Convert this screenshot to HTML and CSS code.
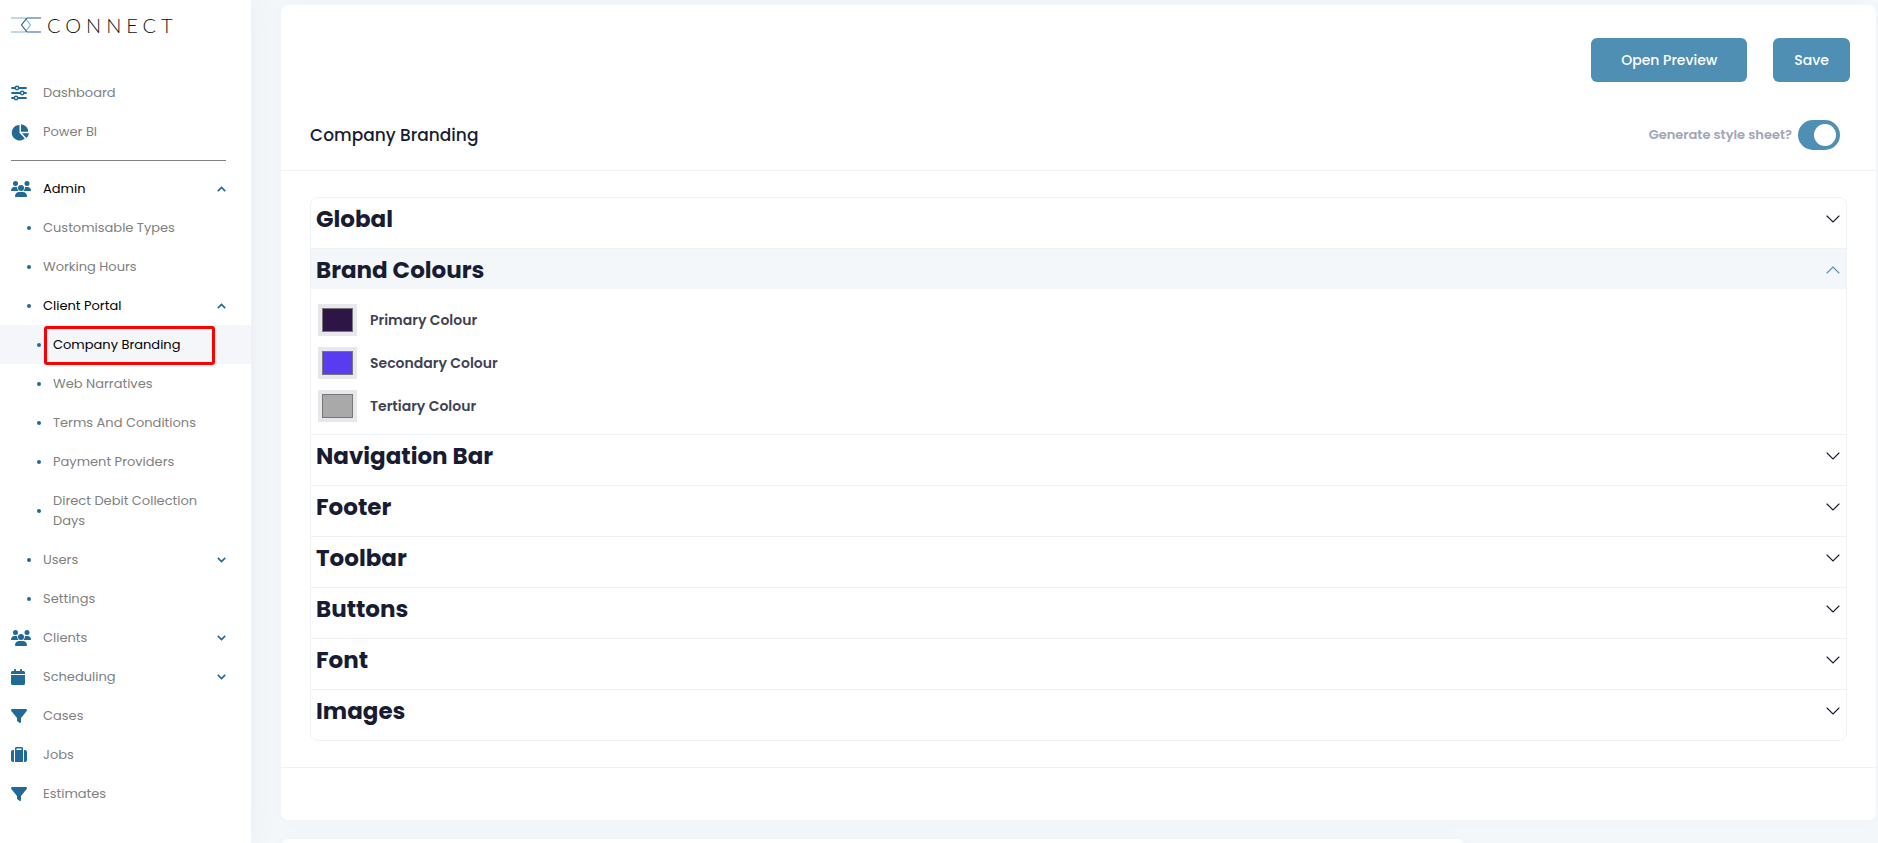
FILE: index.html
```
<!DOCTYPE html>
<html lang="en">
<head>
<meta charset="UTF-8">
<meta name="viewport" content="width=device-width, initial-scale=1.0">
<title>Company Branding</title>
<link rel="stylesheet" href="styles.css">
</head>
<body>

  <!-- shared icons -->
  <svg class="sprite" aria-hidden="true">
    <symbol id="i-sliders" viewBox="0 0 16 16">
      <g fill="none" stroke="currentColor" stroke-width="1.8" stroke-linecap="round">
        <path d="M1 3h2.800M8.200 3H15M1 8h8M13.200 8H15M1 13h1.800M7.200 13H15"/>
        <circle cx="6" cy="3" r="1.700" stroke-width="1.500"/>
        <circle cx="11.200" cy="8" r="1.700" stroke-width="1.500"/>
        <circle cx="5" cy="13" r="1.700" stroke-width="1.500"/>
      </g>
    </symbol>
    <symbol id="i-pie" viewBox="0 0 18 17">
      <path fill="currentColor" d="M8.500.900v7.900l5.300 5.700A7.800 7.800 0 1 1 8.500.900zM10 .200a7.800 7.800 0 0 1 7.300 7.600H10zM11 9.300h7a7.500 7.500 0 0 1-2.600 4.600z"/>
    </symbol>
    <symbol id="i-users" viewBox="0 0 20 16">
      <g fill="currentColor">
        <circle cx="4.500" cy="2.600" r="2.500"/>
        <circle cx="16" cy="2.600" r="2.500"/>
        <circle cx="10" cy="7" r="3"/>
        <path d="M0 9.700C0 7.400 1.500 6 3.500 6h1.600c.4 0 .8.100 1.100.200A4.500 4.500 0 0 0 7.500 10H.400C.200 10 0 9.900 0 9.700zM12.500 10a4.500 4.500 0 0 0 1.400-3.800c.300-.100.700-.200 1.100-.200h1.500C18.500 6 20 7.400 20 9.700c0 .200-.200.300-.400.300zM4 15.300C4 12.700 5.700 11 8.200 11h3.600c2.500 0 4.200 1.700 4.200 4.300 0 .400-.300.700-.700.700H4.700c-.400 0-.700-.300-.700-.700z"/>
      </g>
    </symbol>
    <symbol id="i-calendar" viewBox="0 0 14 16">
      <path fill="currentColor" d="M4 0c.600 0 1 .400 1 1v1h4V1c0-.600.400-1 1-1s1 .400 1 1v1h1.500c.800 0 1.500.700 1.500 1.500V5H0V3.500C0 2.700.700 2 1.500 2H3V1c0-.600.400-1 1-1zM0 6h14v8.500c0 .800-.700 1.500-1.500 1.500h-11C.700 16 0 15.300 0 14.500z"/>
    </symbol>
    <symbol id="i-filter" viewBox="0 0 16 16">
      <path fill="currentColor" d="M.100 1.700C.300 1.300.700 1 1.200 1h13.600c.5 0 .9.300 1.100.700.200.400.100.900-.200 1.300L10 10.100V14c0 .400-.200.700-.600.900-.300.200-.700.100-1-.100l-2-1.500c-.300-.200-.400-.500-.400-.8v-2.400L.300 3C0 2.600-.100 2.100.100 1.700z"/>
    </symbol>
    <symbol id="i-suitcase" viewBox="0 0 16 16">
      <path fill="currentColor" fill-rule="evenodd" d="M4 3V1.500C4 .700 4.700 0 5.500 0h5c.8 0 1.500.700 1.500 1.500V15H4zM5.500 3h5V1.500h-5zM0 5c0-1.100.900-2 2-2h1v12H2c-1.100 0-2-.900-2-2zM13 3h1c1.100 0 2 .9 2 2v8c0 1.100-.9 2-2 2h-1z"/>
    </symbol>
    <symbol id="i-chevron" viewBox="0 0 9 6">
      <path fill="none" stroke="currentColor" stroke-width="1.600" d="M.8.900l3.700 3.700L8.200.900"/>
    </symbol>
    <symbol id="i-arrow" viewBox="0 0 14 8">
      <path fill="none" stroke="currentColor" stroke-width="1.100" stroke-linecap="round" d="M1 1l6 6 6-6"/>
    </symbol>
  </svg>

  <div class="layout">
    <aside class="sidebar">
      <a class="logo" href="#">
        <svg class="logo-mark" viewBox="0 0 30 16" aria-hidden="true">
          <g fill="none" stroke-width="1.200">
            <path stroke="#7fb2d0" d="M0 1h14l5.500 7-5.500 7H0"/>
            <path stroke="#2c5f94" d="M30 1H16l-5.500 7 5.500 7h14"/>
          </g>
        </svg>
        <span>CONNECT</span>
      </a>

      <nav class="menu">
        <a class="menu-item" href="#"><svg class="menu-icon"><use href="#i-sliders"/></svg><span>Dashboard</span></a>
        <a class="menu-item" href="#"><svg class="menu-icon pie"><use href="#i-pie"/></svg><span>Power BI</span></a>
        <hr class="menu-divider">
        <button class="menu-item open" type="button" aria-expanded="true"><svg class="menu-icon wide"><use href="#i-users"/></svg><span>Admin</span><svg class="chevron"><use href="#i-chevron"/></svg></button>
        <a class="menu-item sub" href="#"><i class="dot"></i><span>Customisable Types</span></a>
        <a class="menu-item sub" href="#"><i class="dot"></i><span>Working Hours</span></a>
        <button class="menu-item sub open" type="button" aria-expanded="true"><i class="dot"></i><span>Client Portal</span><svg class="chevron"><use href="#i-chevron"/></svg></button>
        <a class="menu-item subsub active" href="#"><i class="dot"></i><span>Company Branding</span></a>
        <a class="menu-item subsub" href="#"><i class="dot"></i><span>Web Narratives</span></a>
        <a class="menu-item subsub" href="#"><i class="dot"></i><span>Terms And Conditions</span></a>
        <a class="menu-item subsub" href="#"><i class="dot"></i><span>Payment Providers</span></a>
        <a class="menu-item subsub" href="#"><i class="dot"></i><span>Direct Debit Collection Days</span></a>
        <button class="menu-item sub" type="button" aria-expanded="false"><i class="dot"></i><span>Users</span><svg class="chevron"><use href="#i-chevron"/></svg></button>
        <a class="menu-item sub" href="#"><i class="dot"></i><span>Settings</span></a>
        <button class="menu-item" type="button" aria-expanded="false"><svg class="menu-icon wide"><use href="#i-users"/></svg><span>Clients</span><svg class="chevron"><use href="#i-chevron"/></svg></button>
        <button class="menu-item" type="button" aria-expanded="false"><svg class="menu-icon narrow"><use href="#i-calendar"/></svg><span>Scheduling</span><svg class="chevron"><use href="#i-chevron"/></svg></button>
        <a class="menu-item" href="#"><svg class="menu-icon"><use href="#i-filter"/></svg><span>Cases</span></a>
        <a class="menu-item" href="#"><svg class="menu-icon"><use href="#i-suitcase"/></svg><span>Jobs</span></a>
        <a class="menu-item" href="#"><svg class="menu-icon"><use href="#i-filter"/></svg><span>Estimates</span></a>
      </nav>
    </aside>

    <main class="content">
      <section class="card">
        <div class="card-actions">
          <button class="btn btn-wide" type="button">Open Preview</button>
          <button class="btn" type="button">Save</button>
        </div>

        <div class="card-header">
          <h1>Company Branding</h1>
          <div class="switch">
            <label for="generate-sheet">Generate style sheet?</label>
            <input type="checkbox" id="generate-sheet" checked>
          </div>
        </div>

        <div class="card-body">
          <div class="accordion">
            <section class="panel">
              <h2><button type="button" aria-expanded="false">Global<svg><use href="#i-arrow"/></svg></button></h2>
            </section>
            <section class="panel open">
              <h2><button type="button" aria-expanded="true">Brand Colours<svg><use href="#i-arrow"/></svg></button></h2>
              <div class="panel-body">
                <div class="colour-row">
                  <input type="color" id="primary-colour" value="#2d1646">
                  <label for="primary-colour">Primary Colour</label>
                </div>
                <div class="colour-row">
                  <input type="color" id="secondary-colour" value="#5a3cf0">
                  <label for="secondary-colour">Secondary Colour</label>
                </div>
                <div class="colour-row">
                  <input type="color" id="tertiary-colour" value="#a9a9a9">
                  <label for="tertiary-colour">Tertiary Colour</label>
                </div>
              </div>
            </section>
            <section class="panel">
              <h2><button type="button" aria-expanded="false">Navigation Bar<svg><use href="#i-arrow"/></svg></button></h2>
            </section>
            <section class="panel">
              <h2><button type="button" aria-expanded="false">Footer<svg><use href="#i-arrow"/></svg></button></h2>
            </section>
            <section class="panel">
              <h2><button type="button" aria-expanded="false">Toolbar<svg><use href="#i-arrow"/></svg></button></h2>
            </section>
            <section class="panel">
              <h2><button type="button" aria-expanded="false">Buttons<svg><use href="#i-arrow"/></svg></button></h2>
            </section>
            <section class="panel">
              <h2><button type="button" aria-expanded="false">Font<svg><use href="#i-arrow"/></svg></button></h2>
            </section>
            <section class="panel">
              <h2><button type="button" aria-expanded="false">Images<svg><use href="#i-arrow"/></svg></button></h2>
            </section>
          </div>
        </div>

        <div class="card-footer"></div>
      </section>

      <section class="card card-partial"></section>
    </main>
  </div>

</body>
</html>
```
FILE: styles.css
```
* {
  box-sizing: border-box;
}

body {
  margin: 0;
  background: #f3f7fa;
  color: #181c32;
  font-family: Poppins, Inter, "Open Sans", sans-serif;
  font-size: 13px;
}

button {
  font-family: inherit;
  cursor: pointer;
}

a {
  color: inherit;
  text-decoration: none;
}

.sprite {
  display: none;
}

.layout {
  display: flex;
  height: 100vh;
  overflow: hidden;
}

/* sidebar */
.sidebar {
  flex: 0 0 251px;
  background: #fff;
  box-shadow: 0 0 28px rgba(82, 63, 105, 0.05);
}

.logo {
  display: flex;
  align-items: center;
  gap: 6px;
  height: 50px;
  margin-bottom: 23px;
  padding: 0 0 0 11px;
  color: #111;
  font-family: Lato, sans-serif;
  font-size: 20px;
  font-weight: 300;
  letter-spacing: 5px;
}

.logo-mark {
  width: 30px;
  height: 16px;
}

.menu-item {
  position: relative;
  display: flex;
  align-items: center;
  width: 100%;
  min-height: 39px;
  padding: 10px 25px 9px 11px;
  border: none;
  background: none;
  color: #808080;
  font-size: 13px;
  line-height: 20px;
  text-align: left;
}

.menu-item span {
  flex: 1;
}

.menu-icon {
  flex: none;
  width: 16px;
  height: 16px;
  margin-right: 16px;
  color: #216a96;
}

.menu-icon.pie {
  width: 18px;
  height: 17px;
  margin-right: 14px;
}

.menu-icon.wide {
  width: 20px;
  margin-right: 12px;
}

.menu-icon.narrow {
  width: 14px;
  margin-right: 18px;
}

.menu-item.sub {
  padding-left: 27px;
}

.menu-item.subsub {
  padding-left: 37px;
}

.menu-item.open,
.menu-item.active {
  color: #000;
}

.menu-item.active {
  background: #f4f6fa;
}

.menu-item.active::after {
  content: "";
  position: absolute;
  top: 1px;
  left: 44px;
  right: 36px;
  height: 33px;
  border: 3px solid #fe0000;
  border-radius: 3px;
  z-index: 1;
}

.dot {
  flex: none;
  width: 4px;
  height: 4px;
  margin-right: 12px;
  border-radius: 50%;
  background: #216a96;
}

.chevron {
  flex: none;
  width: 9px;
  height: 6px;
  color: #216a96;
}

.menu-item.open .chevron {
  transform: rotate(180deg);
}

.menu-divider {
  height: 1px;
  margin: 9px 25px 8px 11px;
  border: none;
  background: #808080;
}

/* content */
.content {
  flex: 1;
  padding: 5px 2px 0 30px;
}

.card {
  margin-bottom: 19px;
  border-radius: 8px;
  background: #fff;
  box-shadow: 0 0 20px rgba(76, 87, 125, 0.02);
}

.card-partial {
  width: calc(75% - 12px);
  height: 200px;
}

.card-actions {
  display: flex;
  justify-content: flex-end;
  gap: 26px;
  padding: 33px 26px 0 0;
}

.btn {
  height: 44px;
  padding: 0 21px;
  border: none;
  border-radius: 6px;
  background: #4f8fb3;
  color: #fff;
  font-size: 14px;
  font-weight: 500;
}

.btn-wide {
  padding: 0 30px;
}

.card-header {
  display: flex;
  align-items: center;
  justify-content: space-between;
  height: 89px;
  padding: 18px 36px 0 29px;
  border-bottom: 1px solid #eff2f5;
}

.card-header h1 {
  margin: 0;
  font-size: 17px;
  font-weight: 500;
}

.switch {
  display: flex;
  align-items: center;
  gap: 6px;
}

.switch label {
  color: #a1a5b7;
  font-weight: 600;
}

.switch input {
  appearance: none;
  display: flex;
  align-items: center;
  justify-content: flex-end;
  width: 42px;
  height: 30px;
  margin: 0;
  padding: 4px;
  border-radius: 15px;
  background: #4f8fb3;
}

.switch input::before {
  content: "";
  width: 22px;
  height: 22px;
  border-radius: 50%;
  background: #fff;
}

.card-body {
  padding: 26px 29px;
}

/* accordion */
.accordion {
  border: 1px solid #eff2f5;
  border-radius: 8px;
  overflow: hidden;
}

.panel + .panel {
  border-top: 1px solid #eff2f5;
}

.panel h2 {
  margin: 0;
}

.panel h2 button {
  display: flex;
  align-items: center;
  justify-content: space-between;
  width: 100%;
  height: 50px;
  padding: 0 6px 9px 5px;
  border: none;
  background: none;
  color: #181c32;
  font-size: 23px;
  font-weight: 700;
  line-height: 36px;
}

.panel h2 svg {
  width: 14px;
  height: 8px;
}

.panel.open h2 button {
  height: 40px;
  padding: 1px 6px 0 5px;
  background: #f3f7fa;
}

.panel.open h2 svg {
  color: #4f8fb3;
  transform: rotate(180deg);
}

.panel-body {
  display: grid;
  gap: 11px;
  padding: 15px 7px 12px;
}

.colour-row {
  display: flex;
  align-items: center;
  gap: 13px;
}

.colour-row input {
  appearance: none;
  width: 39px;
  height: 32px;
  padding: 4px;
  border: none;
  background: #e8e7ec;
}

.colour-row input::-webkit-color-swatch-wrapper {
  padding: 0;
}

.colour-row input::-webkit-color-swatch {
  border: 1px solid #777;
  border-radius: 0;
}

.colour-row label {
  color: #3f4254;
  font-size: 14px;
  font-weight: 600;
}

.card-footer {
  height: 53px;
  border-top: 1px solid #eff2f5;
}
```
